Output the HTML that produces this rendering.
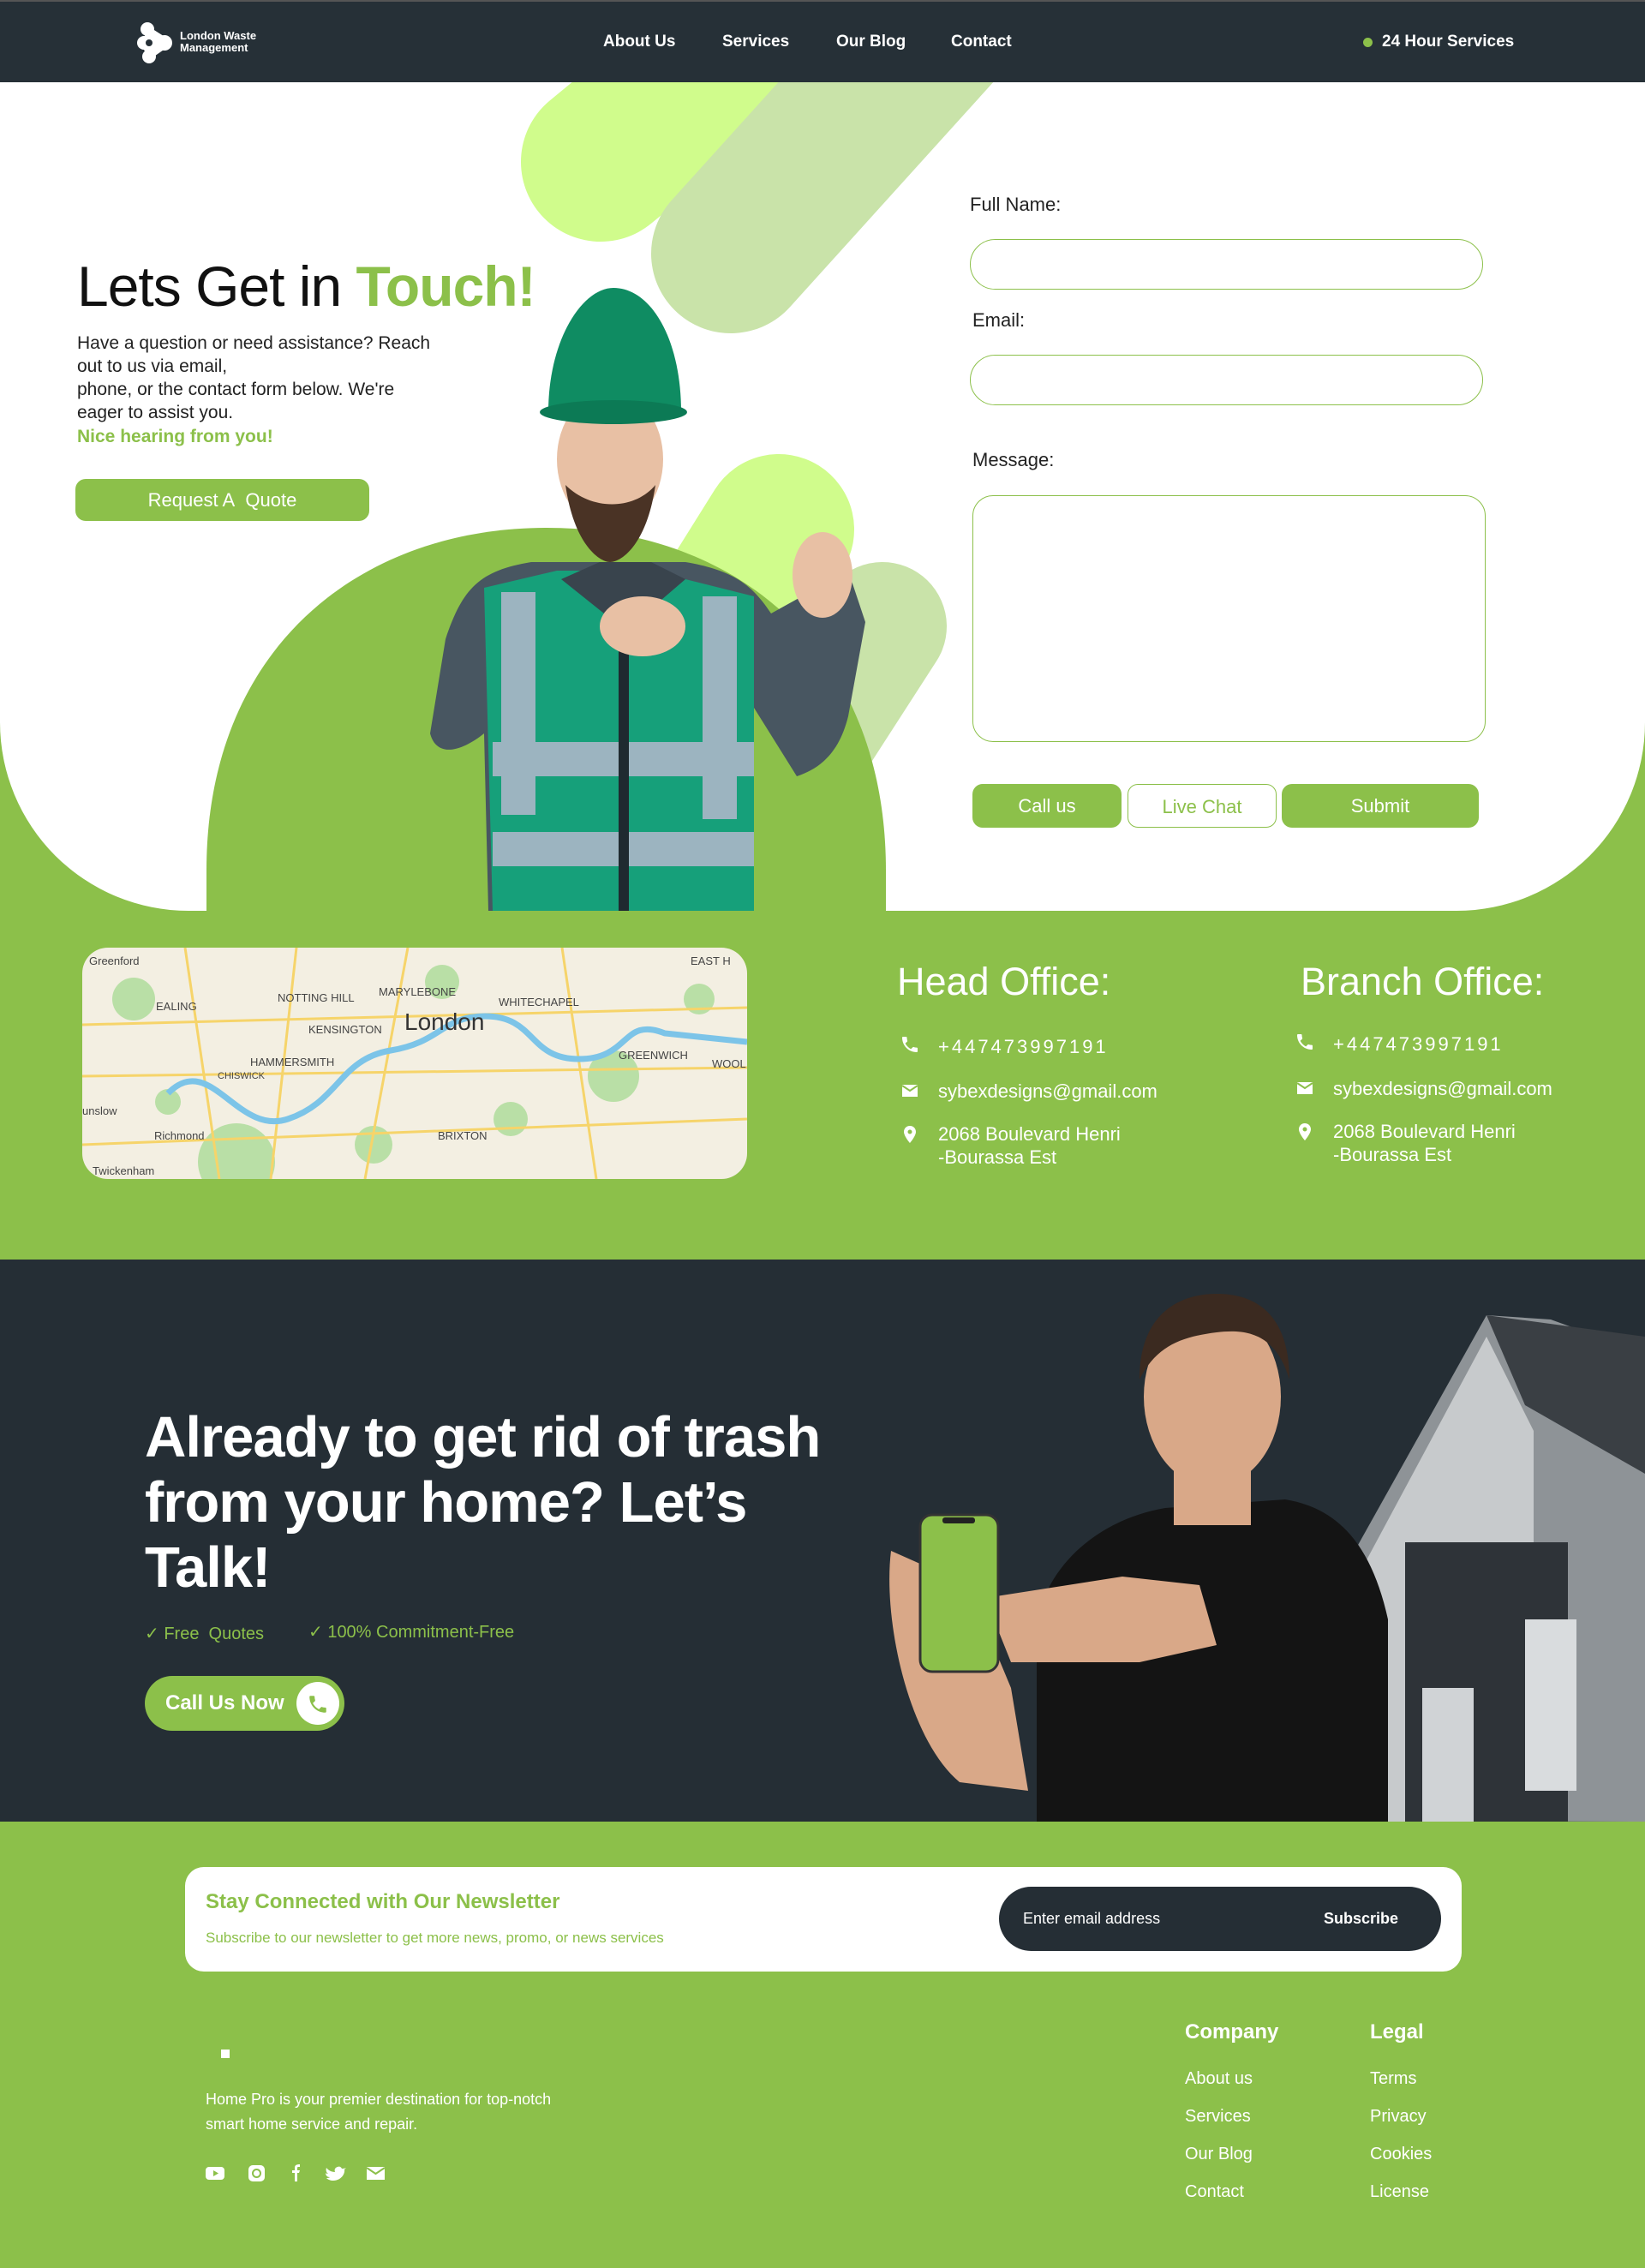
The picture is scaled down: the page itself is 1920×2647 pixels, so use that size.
<!DOCTYPE html>
<html><head><meta charset="utf-8">
<style>
*{margin:0;padding:0;box-sizing:border-box}
body{width:1920px;height:2647px;position:relative;overflow:hidden;font-family:"Liberation Sans",sans-serif;background:#8cc04a}
.a{position:absolute}
.nav{left:0;top:0;width:1920px;height:96px;background:#263037;border-top:2px solid #555}
.nav span{position:absolute;top:36px;color:#fff;font-size:19px;font-weight:bold}
.hero{left:0;top:96px;width:1920px;height:967px;background:#fff;border-radius:0 0 220px 220px;overflow:hidden}
.inp{position:absolute;border:1.5px solid #8cc04a;background:#fff}
.lbl{position:absolute;font-size:22px;color:#222}
.btn{position:absolute;background:#8cc04a;color:#fff;font-size:22px;text-align:center;border-radius:12px}
.ttl{position:absolute;color:#fff;font-size:45px}
.row{position:absolute;color:#fff;font-size:22px;line-height:27px}
.ico{position:absolute;width:24px;height:24px}
.fl{position:absolute;color:#fff;font-size:20px}
</style></head><body>

<div class="a nav">
  <svg class="a" style="left:160px;top:22px" width="44" height="52" viewBox="0 0 44 52"><g fill="#fff"><circle cx="12" cy="10" r="8"/><circle cx="8" cy="26" r="8"/><circle cx="14" cy="42" r="8"/><circle cx="32" cy="26" r="9"/><path d="M12 6 L34 20 L34 32 L14 46 L6 30 Z"/></g><circle cx="14" cy="26" r="4" fill="#263037"/></svg>
  <div class="a" style="left:210px;top:33px;color:#fff;font-size:13px;font-weight:bold;line-height:14px">London Waste<br>Management</div>
  <span style="left:704px">About Us</span>
  <span style="left:843px">Services</span>
  <span style="left:976px">Our Blog</span>
  <span style="left:1110px">Contact</span>
  <div class="a" style="left:1591px;top:42px;width:11px;height:11px;border-radius:50%;background:#8cc04a"></div>
  <span style="left:1613px">24 Hour Services</span>
</div>

<div class="a hero">
  <svg class="a" style="left:0;top:0" width="1920" height="967">
    <line x1="701" y1="93" x2="1013" y2="-164" stroke="#d0fc8c" stroke-width="186" stroke-linecap="round"/>
    <line x1="853" y1="200" x2="1202" y2="-186" stroke="#c9e3a9" stroke-width="186" stroke-linecap="round"/>
    <line x1="909" y1="522" x2="760" y2="760" stroke="#d0fc8c" stroke-width="176" stroke-linecap="round"/>
    <line x1="1030" y1="635" x2="930" y2="790" stroke="#c9e3a9" stroke-width="150" stroke-linecap="round"/>
    <path d="M241 967 L241 920 C241 660 420 520 638 520 C856 520 1034 660 1034 920 L1034 967 Z" fill="#8cc04a"/>
    <path d="M520 650 C540 590 560 570 620 560 L800 560 C860 570 880 590 900 620 L990 570 L1010 630 L990 740 C980 780 960 800 930 810 L880 730 L880 967 L570 967 L565 760 C540 780 510 790 502 760 Z" fill="#485661"/>
    <path d="M565 590 L650 570 L760 570 L880 600 L880 967 L575 967 Z" fill="#16a07a"/>
    <rect x="585" y="595" width="40" height="260" fill="#9cb4c0"/>
    <rect x="820" y="600" width="40" height="260" fill="#9cb4c0"/>
    <rect x="575" y="770" width="305" height="40" fill="#9cb4c0"/>
    <rect x="575" y="875" width="305" height="40" fill="#9cb4c0"/>
    <rect x="722" y="590" width="12" height="377" fill="#1f2a30"/>
    <path d="M655 580 L700 560 L760 560 L800 580 L730 640 Z" fill="#39444d"/>
    <ellipse cx="712" cy="440" rx="62" ry="80" fill="#e8c0a4"/>
    <path d="M660 470 C670 540 700 560 712 560 C725 560 755 540 765 470 C740 500 690 500 660 470 Z" fill="#4a3325"/>
    <path d="M640 385 C640 300 680 240 716 240 C760 240 795 300 795 385 Z" fill="#0f8c62"/>
    <ellipse cx="716" cy="385" rx="86" ry="14" fill="#0c7a55"/>
    <ellipse cx="750" cy="635" rx="50" ry="35" fill="#e8c0a4"/>
    <ellipse cx="960" cy="575" rx="35" ry="50" fill="#e8c0a4"/>
  </svg>
  <div class="a" style="left:90px;top:200px;font-size:66px;color:#111;letter-spacing:-1px;white-space:nowrap">Lets Get in <b style="color:#8cc04a">Touch!</b></div>
  <div class="a" style="left:90px;top:291px;font-size:21px;line-height:27px;color:#222;white-space:nowrap">Have a question or need assistance? Reach<br>out to us via email,<br>phone, or the contact form below. We're<br>eager to assist you.</div>
  <div class="a" style="left:90px;top:402px;font-size:21px;font-weight:bold;color:#8cc04a">Nice hearing from you!</div>
  <div class="btn" style="left:88px;top:463px;width:343px;height:49px;line-height:49px">Request A&nbsp; Quote</div>

  <div class="lbl" style="left:1132px;top:130px">Full Name:</div>
  <div class="inp" style="left:1132px;top:183px;width:599px;height:59px;border-radius:30px"></div>
  <div class="lbl" style="left:1135px;top:265px">Email:</div>
  <div class="inp" style="left:1132px;top:318px;width:599px;height:59px;border-radius:30px"></div>
  <div class="lbl" style="left:1135px;top:428px">Message:</div>
  <div class="inp" style="left:1135px;top:482px;width:599px;height:288px;border-radius:24px"></div>
  <div class="btn" style="left:1135px;top:819px;width:174px;height:51px;line-height:51px">Call us</div>
  <div class="btn" style="left:1316px;top:819px;width:174px;height:51px;line-height:51px;background:#fff;color:#8cc04a;border:1.5px solid #8cc04a">Live Chat</div>
  <div class="btn" style="left:1496px;top:819px;width:230px;height:51px;line-height:51px">Submit</div>
</div>

<div class="a" style="left:96px;top:1106px;width:776px;height:270px;border-radius:30px;overflow:hidden;background:#f3efe2">
  <svg width="776" height="270">
    <g fill="#b9dfa6"><circle cx="60" cy="60" r="25"/><circle cx="420" cy="40" r="20"/><circle cx="620" cy="150" r="30"/><circle cx="180" cy="250" r="45"/><circle cx="340" cy="230" r="22"/><circle cx="720" cy="60" r="18"/><circle cx="500" cy="200" r="20"/><circle cx="100" cy="180" r="15"/></g>
    <g stroke="#f6d46a" stroke-width="3" fill="none"><path d="M0 90 L776 70"/><path d="M0 150 L776 140"/><path d="M120 0 L160 270"/><path d="M380 0 L330 270"/><path d="M560 0 L600 270"/><path d="M0 230 L776 200"/><path d="M250 0 L220 270"/></g>
    <path d="M100 170 C150 120 180 220 240 200 C300 180 300 130 360 120 C420 110 420 80 470 80 C530 80 520 130 580 130 C640 130 630 80 680 100 L776 110" stroke="#7cc4e8" stroke-width="7" fill="none"/>
    <g font-size="13" fill="#444" font-family="Liberation Sans"><text x="8" y="20">Greenford</text><text x="86" y="73">EALING</text><text x="228" y="63">NOTTING HILL</text><text x="346" y="56">MARYLEBONE</text><text x="486" y="68">WHITECHAPEL</text><text x="264" y="100">KENSINGTON</text><text x="196" y="138">HAMMERSMITH</text><text x="626" y="130">GREENWICH</text><text x="84" y="224">Richmond</text><text x="415" y="224">BRIXTON</text><text x="710" y="20">EAST H</text><text x="0" y="195">unslow</text><text x="12" y="265">Twickenham</text><text x="158" y="153" font-size="11">CHISWICK</text><text x="735" y="140">WOOL</text></g>
    <text x="376" y="96" font-size="28" fill="#333" font-family="Liberation Sans">London</text>
  </svg>
</div>

<div class="ttl" style="left:1047px;top:1120px">Head Office:</div>
<div class="ttl" style="left:1518px;top:1120px">Branch Office:</div>
<svg class="ico" style="left:1050px;top:1207px" viewBox="0 0 24 24"><path fill="#fff" d="M6.6 10.8c1.4 2.8 3.8 5.1 6.6 6.6l2.2-2.2c.3-.3.7-.4 1-.2 1.1.4 2.3.6 3.6.6.6 0 1 .4 1 1V20c0 .6-.4 1-1 1C10.6 21 3 13.4 3 4c0-.6.4-1 1-1h3.5c.6 0 1 .4 1 1 0 1.3.2 2.5.6 3.6.1.3 0 .7-.2 1z"/></svg>
<svg class="ico" style="left:1050px;top:1261px" viewBox="0 0 24 24"><path fill="#fff" d="M3 5h18v14H3z"/><path d="M3 6l9 6 9-6" stroke="#8cc04a" stroke-width="2" fill="none"/></svg>
<svg class="ico" style="left:1050px;top:1312px" viewBox="0 0 24 24"><path fill="#fff" d="M12 2C8 2 5 5 5 9c0 5 7 13 7 13s7-8 7-13c0-4-3-7-7-7zm0 9.5a2.5 2.5 0 110-5 2.5 2.5 0 010 5z"/></svg>
<div class="row" style="left:1095px;top:1208px;letter-spacing:3px">+447473997191</div>
<div class="row" style="left:1095px;top:1260px">sybexdesigns@gmail.com</div>
<div class="row" style="left:1095px;top:1310px">2068 Boulevard Henri<br>-Bourassa Est</div>
<svg class="ico" style="left:1511px;top:1204px" viewBox="0 0 24 24"><path fill="#fff" d="M6.6 10.8c1.4 2.8 3.8 5.1 6.6 6.6l2.2-2.2c.3-.3.7-.4 1-.2 1.1.4 2.3.6 3.6.6.6 0 1 .4 1 1V20c0 .6-.4 1-1 1C10.6 21 3 13.4 3 4c0-.6.4-1 1-1h3.5c.6 0 1 .4 1 1 0 1.3.2 2.5.6 3.6.1.3 0 .7-.2 1z"/></svg>
<svg class="ico" style="left:1511px;top:1258px" viewBox="0 0 24 24"><path fill="#fff" d="M3 5h18v14H3z"/><path d="M3 6l9 6 9-6" stroke="#8cc04a" stroke-width="2" fill="none"/></svg>
<svg class="ico" style="left:1511px;top:1309px" viewBox="0 0 24 24"><path fill="#fff" d="M12 2C8 2 5 5 5 9c0 5 7 13 7 13s7-8 7-13c0-4-3-7-7-7zm0 9.5a2.5 2.5 0 110-5 2.5 2.5 0 010 5z"/></svg>
<div class="row" style="left:1556px;top:1205px;letter-spacing:3px">+447473997191</div>
<div class="row" style="left:1556px;top:1257px">sybexdesigns@gmail.com</div>
<div class="row" style="left:1556px;top:1307px">2068 Boulevard Henri<br>-Bourassa Est</div>

<div class="a" style="left:0;top:1470px;width:1920px;height:656px;background:#252e35;overflow:hidden">
  <svg class="a" style="left:0;top:0" width="1920" height="656">
    <path d="M1570 655 L1570 360 L1735 65 L1810 70 L1920 110 L1920 656 Z" fill="#8e9397"/>
    <path d="M1590 360 L1735 90 L1790 200 L1790 656 L1590 656 Z" fill="#c7cacc"/>
    <path d="M1735 65 L1920 90 L1920 250 L1780 170 Z" fill="#3a3f44"/>
    <rect x="1640" y="330" width="190" height="326" fill="#2e3338"/>
    <rect x="1780" y="420" width="60" height="200" fill="#d9dcde"/>
    <rect x="1660" y="500" width="60" height="156" fill="#d0d3d6"/>
    <path d="M1210 656 L1210 420 C1230 340 1300 300 1360 290 L1500 280 C1560 290 1600 330 1620 420 L1620 656 Z" fill="#141414"/>
    <ellipse cx="1415" cy="160" rx="80" ry="105" fill="#d9a888"/>
    <path d="M1330 140 C1330 60 1380 40 1420 40 C1480 40 1505 80 1505 140 C1490 90 1460 80 1420 85 C1380 90 1350 100 1330 140 Z" fill="#3b2a20"/>
    <rect x="1370" y="240" width="90" height="70" fill="#d9a888"/>
    <path d="M1040 340 C1030 420 1060 560 1120 610 L1200 620 L1180 500 L1130 380 Z" fill="#d9a888"/>
    <path d="M1150 395 L1310 370 L1400 380 L1420 450 L1330 470 L1180 470 Z" fill="#d9a888"/>
    <rect x="1074" y="298" width="91" height="183" rx="14" fill="#8cc04a" stroke="#333" stroke-width="3"/>
    <rect x="1100" y="301" width="38" height="7" rx="3" fill="#222"/>
  </svg>
  <div class="a" style="left:169px;top:170px;color:#fff;font-size:67px;font-weight:bold;line-height:76px;letter-spacing:-1px;width:860px">Already to get rid of trash<br>from your home? Let’s<br>Talk!</div>
  <div class="a" style="left:169px;top:424px;color:#8cc04a;font-size:20px">✓ Free&nbsp; Quotes</div>
  <div class="a" style="left:360px;top:422px;color:#8cc04a;font-size:20px">✓ 100% Commitment-Free</div>
  <div class="a" style="left:169px;top:486px;width:233px;height:64px;border-radius:32px;background:#8cc04a"></div>
  <div class="a" style="left:193px;top:504px;color:#fff;font-size:24px;font-weight:bold">Call Us Now</div>
  <div class="a" style="left:346px;top:493px;width:50px;height:50px;border-radius:50%;background:#fff"></div>
  <svg class="a" style="left:358px;top:506px" width="26" height="26" viewBox="0 0 24 24"><path fill="#8cc04a" d="M6.6 10.8c1.4 2.8 3.8 5.1 6.6 6.6l2.2-2.2c.3-.3.7-.4 1-.2 1.1.4 2.3.6 3.6.6.6 0 1 .4 1 1V20c0 .6-.4 1-1 1C10.6 21 3 13.4 3 4c0-.6.4-1 1-1h3.5c.6 0 1 .4 1 1 0 1.3.2 2.5.6 3.6.1.3 0 .7-.2 1z"/></svg>
</div>

<div class="a" style="left:216px;top:2179px;width:1490px;height:122px;background:#fff;border-radius:22px"></div>
<div class="a" style="left:240px;top:2206px;color:#8cc04a;font-size:24px;font-weight:bold">Stay Connected with Our Newsletter</div>
<div class="a" style="left:240px;top:2252px;color:#8cc04a;font-size:17px">Subscribe to our newsletter to get more news, promo, or news services</div>
<div class="a" style="left:1166px;top:2202px;width:516px;height:75px;border-radius:38px;background:#252e35"></div>
<div class="a" style="left:1194px;top:2229px;color:#fff;font-size:18px">Enter email address</div>
<div class="a" style="left:1545px;top:2229px;color:#fff;font-size:18px;font-weight:bold">Subscribe</div>

<div class="a" style="left:258px;top:2392px;width:10px;height:10px;background:#fff"></div>
<div class="a" style="left:240px;top:2436px;color:#fff;font-size:18px;line-height:29px">Home Pro is your premier destination for top-notch<br>smart home service and repair.</div>
<svg class="a" style="left:240px;top:2524px" width="230" height="24" viewBox="0 0 230 24">
  <rect x="0" y="5" width="22" height="15" rx="4" fill="#fff"/><path d="M9 9 L15 12.5 L9 16 Z" fill="#8cc04a"/>
  <rect x="50" y="3" width="19" height="19" rx="5" fill="#fff"/><circle cx="59.5" cy="12.5" r="4.5" fill="none" stroke="#8cc04a" stroke-width="2"/>
  <path d="M104 22 V12 H101 V9 H104 V6 C104 3 106 2 110 2 V5 H108 C107 5 107 6 107 7 V9 H110 L109 12 H107 V22 Z" fill="#fff"/>
  <path d="M164 6 C162 7 160 7 159 7 C158 5 156 4 154 5 C151 6 150 8 151 11 C147 11 143 9 141 6 C140 9 141 12 143 13 C142 13 141 13 140 12 C140 15 142 17 145 17 C144 18 142 18 141 18 C143 20 146 21 149 21 C157 21 163 14 162 8 Z" fill="#fff"/>
  <rect x="188" y="5" width="21" height="15" fill="#fff"/><path d="M188 6 L198.5 13 L209 6" stroke="#8cc04a" stroke-width="2" fill="none"/>
</svg>
<div class="fl" style="left:1383px;top:2358px;font-size:24px;font-weight:bold">Company</div>
<div class="fl" style="left:1599px;top:2358px;font-size:24px;font-weight:bold">Legal</div>
<div class="fl" style="left:1383px;top:2415px">About us</div>
<div class="fl" style="left:1383px;top:2459px">Services</div>
<div class="fl" style="left:1383px;top:2503px">Our Blog</div>
<div class="fl" style="left:1383px;top:2547px">Contact</div>
<div class="fl" style="left:1599px;top:2415px">Terms</div>
<div class="fl" style="left:1599px;top:2459px">Privacy</div>
<div class="fl" style="left:1599px;top:2503px">Cookies</div>
<div class="fl" style="left:1599px;top:2547px">License</div>
</body></html>
